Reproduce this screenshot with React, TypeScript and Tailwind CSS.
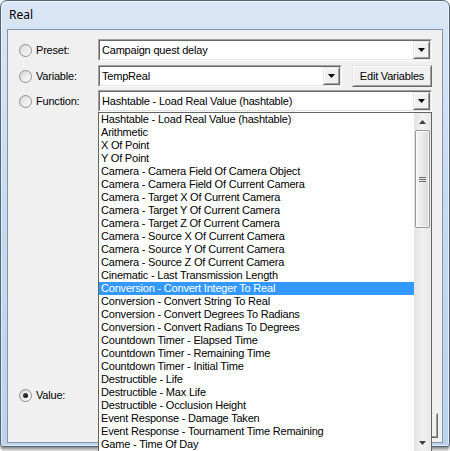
import React from "react";

const items = [
  "Hashtable - Load Real Value (hashtable)",
  "Arithmetic",
  "X Of Point",
  "Y Of Point",
  "Camera - Camera Field Of Camera Object",
  "Camera - Camera Field Of Current Camera",
  "Camera - Target X Of Current Camera",
  "Camera - Target Y Of Current Camera",
  "Camera - Target Z Of Current Camera",
  "Camera - Source X Of Current Camera",
  "Camera - Source Y Of Current Camera",
  "Camera - Source Z Of Current Camera",
  "Cinematic - Last Transmission Length",
  "Conversion - Convert Integer To Real",
  "Conversion - Convert String To Real",
  "Conversion - Convert Degrees To Radians",
  "Conversion - Convert Radians To Degrees",
  "Countdown Timer - Elapsed Time",
  "Countdown Timer - Remaining Time",
  "Countdown Timer - Initial Time",
  "Destructible - Life",
  "Destructible - Max Life",
  "Destructible - Occlusion Height",
  "Event Response - Damage Taken",
  "Event Response - Tournament Time Remaining",
  "Game - Time Of Day",
];

function Radio({ checked }: { checked?: boolean }) {
  return (
    <div className="w-[13px] h-[13px] rounded-full border border-[#8e8f8f] bg-gradient-to-br from-[#d4d4d4] to-[#ffffff] flex items-center justify-center shrink-0">
      <div className="w-[9px] h-[9px] rounded-full bg-gradient-to-br from-[#dcdcdc] to-[#f8f8f8] flex items-center justify-center">
        {checked && (
          <div className="w-[5px] h-[5px] rounded-full bg-gradient-to-br from-[#4a4a4a] to-[#0a0a0a]" />
        )}
      </div>
    </div>
  );
}

function Arrow({ up, color }: { up?: boolean; color: string }) {
  return (
    <svg width="7" height="4" viewBox="0 0 7 4">
      {up ? (
        <polygon points="0,4 7,4 3.5,0" fill={color} />
      ) : (
        <polygon points="0,0 7,0 3.5,4" fill={color} />
      )}
    </svg>
  );
}

function Raised({ className, children }: { className: string; children?: React.ReactNode }) {
  return (
    <div className={"border border-t-[#e3e3e3] border-l-[#e3e3e3] border-r-[#696969] border-b-[#696969] " + className}>
      <div className="w-full h-full border border-t-white border-l-white border-r-[#a0a0a0] border-b-[#a0a0a0] bg-[#f0f0f0] flex items-center justify-center">
        {children}
      </div>
    </div>
  );
}

function Combo({ className, text }: { className: string; text: string }) {
  return (
    <div className={"h-[22px] border border-t-[#a0a0a0] border-l-[#a0a0a0] border-r-white border-b-white " + className}>
      <div className="w-full h-full border border-t-[#696969] border-l-[#696969] border-r-[#e3e3e3] border-b-[#e3e3e3] bg-white flex items-center">
        <div className="flex-1 pl-[2px] whitespace-nowrap overflow-hidden">{text}</div>
        <Raised className="w-[17px] h-[18px]">
          <Arrow color="#000000" />
        </Raised>
      </div>
    </div>
  );
}

function Row({ label, children, className, checked }: { label: string; children?: React.ReactNode; className: string; checked?: boolean }) {
  return (
    <div className={"h-[22px] flex items-center pl-[11px] " + className}>
      <Radio checked={checked} />
      <div className="w-[66px] pl-[4px] shrink-0">{label}</div>
      {children}
    </div>
  );
}

export default function App() {
  return (
    <div className="relative w-[450px] h-[451px] bg-white overflow-hidden font-['Liberation_Sans',Arial,sans-serif] text-[11px] tracking-[-0.2px] text-black">
      <div className="flex flex-col w-[450px] h-[447px] rounded-t-[7px] rounded-b-[3px] border border-[#54647a] bg-gradient-to-b from-[#d9e6f5] via-[#c6d9ef] to-[#bdd3ec] shadow-[inset_0_0_0_1px_rgba(255,255,255,0.55),0_2px_3px_rgba(0,0,0,0.5)]">
        <div className="h-[28px] flex items-center pl-[8px] pb-[1px] font-['Noto_Sans',sans-serif] text-[12px] tracking-normal text-black">
          Real
        </div>
        <div className="flex-1 mx-[6px] mb-[3px] border border-[#8395ac] bg-[#f0f0f0] flex flex-col pt-[9px]">
          <Row label="Preset:" className="">
            <Combo className="w-[334px]" text="Campaign quest delay" />
          </Row>
          <Row label="Variable:" className="mt-[4px]">
            <Combo className="w-[244px]" text="TempReal" />
            <Raised className="ml-[10px] w-[80px] h-[22px]">
              <span>Edit Variables</span>
            </Raised>
          </Row>
          <Row label="Function:" className="mt-[3px]">
            <Combo className="w-[334px]" text="Hashtable - Load Real Value (hashtable)" />
          </Row>
          <Row label="Value:" className="mt-[272px]" checked />
          <div className="flex justify-end pr-[4px] mt-[7px]">
            <Raised className="w-[75px] h-[25px]" />
          </div>
        </div>
      </div>
      <div className="h-[4px] mx-[2px] bg-gradient-to-b from-[#8a8a8a] to-[#e6e6e6]" />

      {/* dropdown list popup */}
      <div className="absolute left-[98px] top-[112px] w-[334px] h-[340px] border border-[#646464] bg-white flex">
        <div className="w-[315px] flex flex-col">
          {items.map((t, i) => (
            <div
              key={i}
              className={
                i === 13
                  ? "h-[13px] leading-[13px] pl-[2px] whitespace-nowrap bg-[#3399ff] text-white"
                  : "h-[13px] leading-[13px] pl-[2px] whitespace-nowrap"
              }
            >
              {t}
            </div>
          ))}
        </div>
        <div className="w-[17px] flex flex-col bg-gradient-to-r from-[#e3e3e3] via-[#f1f1f1] to-[#e8e8e8]">
          <div className="h-[17px] flex items-center justify-center">
            <Arrow up color="#404040" />
          </div>
          <div className="mx-[1px] h-[98px] rounded-[2px] border border-[#979797] bg-gradient-to-r from-[#f4f4f4] via-[#e9e9e9] to-[#d9d9d9] flex flex-col items-center justify-center gap-[1px] shadow-[inset_0_0_0_1px_rgba(255,255,255,0.8)]">
            <div className="w-[7px] h-[1px] bg-[#6a6a6a]" />
            <div className="w-[7px] h-[1px] bg-[#6a6a6a]" />
            <div className="w-[7px] h-[1px] bg-[#6a6a6a]" />
          </div>
          <div className="flex-1" />
          <div className="h-[17px] flex items-center justify-center">
            <Arrow color="#404040" />
          </div>
        </div>
      </div>
    </div>
  );
}
